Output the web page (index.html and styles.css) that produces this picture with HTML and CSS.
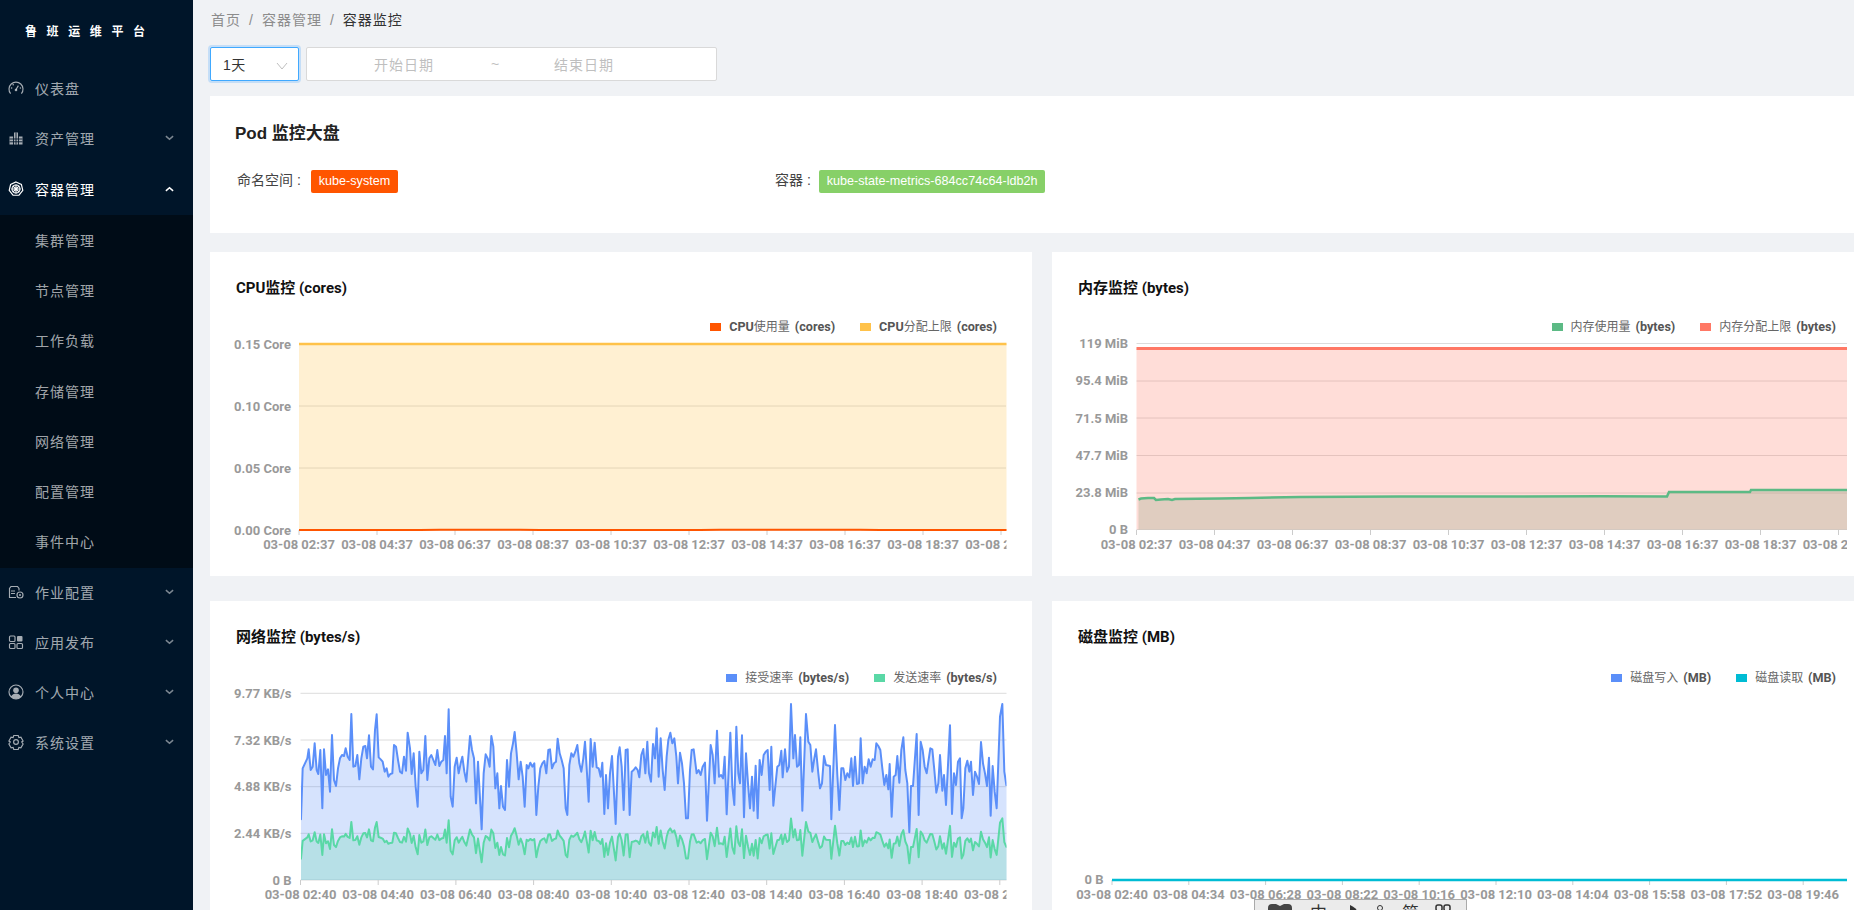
FILE: index.html
```html
<!DOCTYPE html>
<html lang="zh-CN">
<head>
<meta charset="utf-8">
<title>容器监控</title>
<link rel="stylesheet" href="styles.css">
</head>
<body>
<aside class="sidebar">
  <div class="logo">鲁班运维平台</div>
  <nav class="menu">
    <div class="item">
      <svg class="icon" viewBox="0 0 16 16"><path class="ln" d="M2.600 13.600A7 7 0 1 1 13.400 13.600"/><path class="ln" d="M8 9.500 10.400 5.600"/><circle class="dot" cx="8" cy="10" r="1.300"/><circle class="dot" cx="3.600" cy="8" r=".8"/><circle class="dot" cx="5.200" cy="4.800" r=".8"/><circle class="dot" cx="12.400" cy="8" r=".8"/></svg>
      <span>仪表盘</span>
    </div>
    <div class="item">
      <svg class="icon" viewBox="0 0 16 16"><path class="dot" d="M1.500 6.500h3.600v8H1.500zM6 2.500h4v12H6zM10.900 6.500h3.600v8h-3.600z"/><path class="cut" d="M1.500 9h13M1.500 11.800h13M8 2.500v12"/></svg>
      <span>资产管理</span>
      <svg class="chev" viewBox="0 0 10 6"><path d="M1 1l4 3.500L9 1"/></svg>
    </div>
    <div class="item active">
      <svg class="icon" viewBox="0 0 16 16"><path class="ln" d="M8 .9l5.400 2.600 1.400 5.900-3.800 4.800H5l-3.800-4.800 1.400-5.900z"/><circle class="ln" cx="8" cy="8" r="4"/><path class="ln" d="M8 3.500v9M3.500 8h9M4.800 4.800l6.400 6.400M11.200 4.800l-6.400 6.400"/></svg>
      <span>容器管理</span>
      <svg class="chev" viewBox="0 0 10 6"><path d="M1 5l4-3.500L9 5"/></svg>
    </div>
    <div class="submenu">
      <div class="item">集群管理</div>
      <div class="item">节点管理</div>
      <div class="item">工作负载</div>
      <div class="item">存储管理</div>
      <div class="item">网络管理</div>
      <div class="item">配置管理</div>
      <div class="item">事件中心</div>
    </div>
    <div class="item">
      <svg class="icon" viewBox="0 0 16 16"><path class="ln" d="M8 13.500H1.500V4.500L3 2.500h6.500L11 4.500v2"/><path class="ln" d="M3 7h4M3 9.500h4"/><circle class="ln" cx="12" cy="11" r="3"/><circle class="dot" cx="12" cy="11" r="1"/></svg>
      <span>作业配置</span>
      <svg class="chev" viewBox="0 0 10 6"><path d="M1 1l4 3.500L9 1"/></svg>
    </div>
    <div class="item">
      <svg class="icon" viewBox="0 0 16 16"><rect class="ln" x="1.500" y="2" width="5.500" height="5.500" rx="1"/><rect class="dot" x="9" y="2" width="5.500" height="5.500" rx="1"/><rect class="ln" x="1.500" y="9.500" width="5.500" height="5" rx="1"/><rect class="ln" x="9" y="9.500" width="5.500" height="5" rx="1"/></svg>
      <span>应用发布</span>
      <svg class="chev" viewBox="0 0 10 6"><path d="M1 1l4 3.500L9 1"/></svg>
    </div>
    <div class="item">
      <svg class="icon" viewBox="0 0 16 16"><circle class="ln" cx="8" cy="8" r="7"/><circle class="dot" cx="8" cy="6.300" r="2.800"/><path class="dot" d="M3 12.600c1-2.400 3-3.200 5-3.200s4 .8 5 3.200a7 7 0 0 1-10 0z"/></svg>
      <span>个人中心</span>
      <svg class="chev" viewBox="0 0 10 6"><path d="M1 1l4 3.500L9 1"/></svg>
    </div>
    <div class="item">
      <svg class="icon" viewBox="0 0 16 16"><path class="ln" d="M5.800 1.500h4.400l.7 2 2-.3 2.200 3.800-1.400 1 1.400 2-2.200 3.800-2-.4-.7 2.100H5.800l-.7-2.100-2 .4L.9 10l1.400-2-1.400-1 2.200-3.800 2 .3z"/><circle class="ln" cx="8" cy="8" r="2.400"/></svg>
      <span>系统设置</span>
      <svg class="chev" viewBox="0 0 10 6"><path d="M1 1l4 3.500L9 1"/></svg>
    </div>
  </nav>
</aside>

<main class="main">
  <div class="breadcrumb">
    <span>首页</span><i>/</i><span>容器管理</span><i>/</i><span class="current">容器监控</span>
  </div>

  <div class="filters">
    <div class="select">
      <span>1天</span>
      <svg class="select-arrow" viewBox="0 0 12 8"><path d="M1 1l5 6 5-6"/></svg>
    </div>
    <div class="range">
      <span class="ph">开始日期</span>
      <span class="tilde">~</span>
      <span class="ph">结束日期</span>
    </div>
  </div>

  <section class="pod-card">
    <h1 class="pod-title">Pod 监控大盘</h1>
    <div class="pod-fields">
      <div class="field field-ns"><span class="field-label">命名空间 :</span><span class="tag tag-orange">kube-system</span></div>
      <div class="field"><span class="field-label">容器 :</span><span class="tag tag-green">kube-state-metrics-684cc74c64-ldb2h</span></div>
    </div>
  </section>

  <div class="charts">
    <section class="card">
      <h2 class="card-title">CPU监控 (cores)</h2>
      <div class="legend">
        <span class="lg"><b class="sw c-orange"></b><strong>CPU</strong>使用量 <strong>(cores)</strong></span>
        <span class="lg"><b class="sw c-yellow"></b><strong>CPU</strong>分配上限 <strong>(cores)</strong></span>
      </div>
      <svg class="chart" viewBox="210 336 822 240">
        <defs><clipPath id="clip-cpu"><rect x="210" y="336" width="796.500" height="240"/></clipPath></defs>
        <path class="grid" d="M299 344H1006M299 406H1006M299 468H1006M299 530H1006"/>
        <path class="tick" d="M299 530v5M377 530v5M455 530v5M533 530v5M611 530v5M689 530v5M767 530v5M845 530v5M923 530v5M1001 530v5"/>
        <rect class="fill-yellow" x="299" y="344" width="707.500" height="186"/>
        <path class="line-yellow" d="M299 344H1006.500"/>
        <path class="line-orange" d="M299 530H420L440 529.700H520L540 530.100H700L720 529.800H860L880 530.100H1006.500"/>
        <g class="ylab">
          <text x="291" y="348.500">0.15 Core</text><text x="291" y="410.500">0.10 Core</text><text x="291" y="472.500">0.05 Core</text><text x="291" y="534.500">0.00 Core</text>
        </g>
        <g class="xlab" clip-path="url(#clip-cpu)">
          <text x="299" y="548.500">03-08 02:37</text><text x="377" y="548.500">03-08 04:37</text><text x="455" y="548.500">03-08 06:37</text><text x="533" y="548.500">03-08 08:37</text><text x="611" y="548.500">03-08 10:37</text><text x="689" y="548.500">03-08 12:37</text><text x="767" y="548.500">03-08 14:37</text><text x="845" y="548.500">03-08 16:37</text><text x="923" y="548.500">03-08 18:37</text><text x="1001" y="548.500">03-08 20:37</text>
        </g>
      </svg>
    </section>

    <section class="card">
      <h2 class="card-title">内存监控 (bytes)</h2>
      <div class="legend">
        <span class="lg"><b class="sw c-mem"></b>内存使用量 <strong>(bytes)</strong></span>
        <span class="lg"><b class="sw c-red"></b>内存分配上限 <strong>(bytes)</strong></span>
      </div>
      <svg class="chart" viewBox="1052 336 822 240">
        <defs><clipPath id="clip-mem"><rect x="1052" y="336" width="795" height="240"/></clipPath></defs>
        <path class="grid" d="M1136.500 343.500H1847M1136.500 381H1847M1136.500 418H1847M1136.500 455.500H1847M1136.500 493H1847M1136.500 529.500H1847"/>
        <path class="tick" d="M1136.500 530v5M1214.500 530v5M1292.500 530v5M1370.500 530v5M1448.500 530v5M1526.500 530v5M1604.500 530v5M1682.500 530v5M1760.500 530v5M1838.500 530v5"/>
        <rect class="fill-red" x="1136.500" y="348.500" width="710.500" height="181"/>
        <path class="line-red" d="M1136.500 348.500H1847"/>
        <path class="fill-mem" d="M1138.500 529.500V499.500L1141 498.500 1148 498 1154 498 1156 500 1161 499.500 1168 499 1172 500 1175 499 1220 498.500 1250 498 1300 497 1400 496.500 1500 496.500 1600 496.200 1667 496.500 1669 492 1750 492 1751 490 1847 490V529.500Z"/>
        <path class="line-mem" d="M1138.500 499.500L1141 498.500 1148 498 1154 498 1156 500 1161 499.500 1168 499 1172 500 1175 499 1220 498.500 1250 498 1300 497 1400 496.500 1500 496.500 1600 496.200 1667 496.500 1669 492 1750 492 1751 490 1847 490"/>
        <g class="ylab">
          <text x="1128" y="347.500">119 MiB</text><text x="1128" y="385">95.4 MiB</text><text x="1128" y="422.500">71.5 MiB</text><text x="1128" y="460">47.7 MiB</text><text x="1128" y="497">23.8 MiB</text><text x="1128" y="534">0 B</text>
        </g>
        <g class="xlab" clip-path="url(#clip-mem)">
          <text x="1136.500" y="548.500">03-08 02:37</text><text x="1214.500" y="548.500">03-08 04:37</text><text x="1292.500" y="548.500">03-08 06:37</text><text x="1370.500" y="548.500">03-08 08:37</text><text x="1448.500" y="548.500">03-08 10:37</text><text x="1526.500" y="548.500">03-08 12:37</text><text x="1604.500" y="548.500">03-08 14:37</text><text x="1682.500" y="548.500">03-08 16:37</text><text x="1760.500" y="548.500">03-08 18:37</text><text x="1838.500" y="548.500">03-08 20:37</text>
        </g>
      </svg>
    </section>

    <section class="card">
      <h2 class="card-title">网络监控 (bytes/s)</h2>
      <div class="legend">
        <span class="lg"><b class="sw c-blue"></b>接受速率 <strong>(bytes/s)</strong></span>
        <span class="lg"><b class="sw c-teal"></b>发送速率 <strong>(bytes/s)</strong></span>
      </div>
      <svg class="chart" viewBox="210 685 822 240">
        <defs>
          <clipPath id="clip-net"><rect x="210" y="685" width="796.500" height="240"/></clipPath>
          <clipPath id="clip-plot"><rect x="301" y="685" width="705.500" height="195"/></clipPath>
          <path id="net" class="series" d="M296 760V478H303L308 325 315 310 322 295 326 268 332 330 338 320 344 250 350 330 355 342 361 270 367 445 372 268 378 345 384 328 390 395 396 225 402 360 408 378 414 325 420 295 426 285 432 288 437 265 443 290 449 300 454 162 460 320 466 318 472 285 478 358 484 295 490 260 496 258 501 295 507 226 513 320 519 328 525 210 530 163 536 292 542 298 548 305 554 335 560 325 565 350 571 342 577 340 582 255 588 260 594 300 600 335 606 340 612 290 618 332 623 218 630 265 635 342 641 280 647 380 653 440 658 275 664 340 670 330 676 228 682 360 688 295 694 285 700 300 706 315 712 270 718 318 724 305 730 300 735 228 740 340 746 148 752 410 758 440 764 320 770 293 776 340 782 310 787 290 793 335 799 365 810 228 816 270 822 295 828 430 834 305 845 508 851 340 857 283 863 295 869 320 874 228 880 260 886 385 892 340 898 445 903 378 909 440 915 450 921 300 927 380 933 280 939 250 944 216 950 280 956 358 962 305 968 350 974 440 980 315 985 325 991 308 997 320 1003 310 1009 465 1015 380 1021 325 1027 310 1033 303 1039 340 1045 270 1050 268 1056 325 1062 310 1068 305 1073 236 1079 280 1085 300 1091 325 1097 445 1102 465 1108 315 1114 280 1120 290 1126 275 1132 255 1138 310 1144 335 1150 295 1155 245 1161 340 1166 425 1172 237 1178 320 1184 248 1190 322 1196 325 1202 350 1207 308 1213 462 1218 345 1224 445 1230 340 1236 288 1247 492 1254 290 1259 262 1265 320 1271 450 1277 270 1283 268 1289 465 1295 335 1301 330 1307 322 1313 330 1318 352 1324 285 1330 267 1336 340 1342 245 1347 340 1353 365 1359 252 1365 295 1370 205 1376 350 1382 235 1388 330 1394 390 1400 290 1405 240 1411 218 1417 250 1423 235 1429 290 1434 370 1440 278 1446 310 1452 370 1458 475 1464 475 1470 330 1475 270 1481 268 1490 340 1496 330 1502 345 1508 320 1515 308 1521 482 1532 255 1538 285 1544 370 1551 212 1557 350 1563 345 1569 355 1574 290 1580 463 1591 218 1597 380 1603 435 1609 200 1615 340 1620 370 1626 226 1632 472 1638 280 1644 370 1650 445 1656 350 1661 452 1667 317 1673 475 1679 300 1685 345 1691 285 1697 275 1703 270 1709 390 1714 260 1720 437 1732 320 1738 315 1744 272 1748 352 1755 268 1761 335 1767 320 1773 132 1780 295 1785 225 1791 320 1797 315 1801 232 1807 452 1818 162 1825 245 1831 255 1837 335 1843 295 1848 268 1855 340 1860 385 1866 370 1872 288 1878 315 1890 318 1894 478 1905 195 1912 345 1918 450 1924 325 1930 325 1936 360 1942 340 1948 352 1954 295 1959 378 1965 290 1971 372 1977 370 1982 235 1988 370 1994 320 2000 340 2006 298 2012 320 2018 298 2024 300 2029 250 2035 258 2041 270 2047 325 2053 375 2059 345 2065 388 2069 312 2075 470 2081 350 2087 345 2092 288 2098 368 2104 270 2110 232 2116 330 2122 370 2128 517 2133 378 2139 378 2150 222 2156 465 2162 245 2168 270 2174 320 2180 340 2191 265 2197 268 2203 330 2209 398 2215 370 2220 285 2227 392 2232 345 2238 435 2250 196 2256 462 2262 340 2268 375 2274 305 2280 295 2285 475 2290 445 2296 325 2302 302 2308 335 2313 305 2319 405 2325 335 2331 350 2337 372 2343 246 2349 310 2355 340 2361 378 2367 293 2372 467 2378 318 2384 395 2390 445 2400 170 2407 132 2413 335 2419 375H2432V760Z"/>
        </defs>
        <path class="grid" d="M300.500 693.300H1006.500M300.500 740H1006.500M300.500 786.700H1006.500M300.500 833.300H1006.500M300.500 880H1006.500"/>
        <path class="tick" d="M300.500 880v5M378.200 880v5M455.900 880v5M533.600 880v5M611.300 880v5M689 880v5M766.700 880v5M844.400 880v5M922.100 880v5M999.800 880v5"/>
        <g clip-path="url(#clip-plot)">
          <g transform="translate(200 660) scale(.33333)">
            <use href="#net" class="area-blue"/>
            <use href="#net" class="stroke-blue"/>
            <g transform="translate(0 660) scale(1 .35) translate(0 -660)">
              <use href="#net" class="area-teal"/>
              <use href="#net" class="stroke-teal"/>
            </g>
          </g>
        </g>
        <g class="ylab">
          <text x="291.500" y="697.800">9.77 KB/s</text><text x="291.500" y="744.500">7.32 KB/s</text><text x="291.500" y="791.200">4.88 KB/s</text><text x="291.500" y="837.800">2.44 KB/s</text><text x="291.500" y="884.500">0 B</text>
        </g>
        <g class="xlab" clip-path="url(#clip-net)">
          <text x="300.500" y="899">03-08 02:40</text><text x="378.200" y="899">03-08 04:40</text><text x="455.900" y="899">03-08 06:40</text><text x="533.600" y="899">03-08 08:40</text><text x="611.300" y="899">03-08 10:40</text><text x="689" y="899">03-08 12:40</text><text x="766.700" y="899">03-08 14:40</text><text x="844.400" y="899">03-08 16:40</text><text x="922.100" y="899">03-08 18:40</text><text x="999.800" y="899">03-08 20:40</text>
        </g>
      </svg>
    </section>

    <section class="card">
      <h2 class="card-title">磁盘监控 (MB)</h2>
      <div class="legend">
        <span class="lg"><b class="sw c-blue"></b>磁盘写入 <strong>(MB)</strong></span>
        <span class="lg"><b class="sw c-cyan"></b>磁盘读取 <strong>(MB)</strong></span>
      </div>
      <svg class="chart" viewBox="1052 685 822 240">
        <path class="tick" d="M1112 880v5M1188.800 880v5M1265.600 880v5M1342.400 880v5M1419.200 880v5M1496 880v5M1572.800 880v5M1649.600 880v5M1726.400 880v5M1803.200 880v5"/>
        <path class="line-cyan" d="M1112 880H1847"/>
        <g class="ylab"><text x="1103.500" y="884">0 B</text></g>
        <g class="xlab">
          <text x="1112" y="899">03-08 02:40</text><text x="1188.800" y="899">03-08 04:34</text><text x="1265.600" y="899">03-08 06:28</text><text x="1342.400" y="899">03-08 08:22</text><text x="1419.200" y="899">03-08 10:16</text><text x="1496" y="899">03-08 12:10</text><text x="1572.800" y="899">03-08 14:04</text><text x="1649.600" y="899">03-08 15:58</text><text x="1726.400" y="899">03-08 17:52</text><text x="1803.200" y="899">03-08 19:46</text>
        </g>
      </svg>
    </section>
  </div>
</main>

<div class="ime">
  <svg class="ime-logo" viewBox="0 0 24 24"><path d="M0 4q0-4 4-4h4l4 2 4-2h4q4 0 4 4v16q0 4-4 4H4q-4 0-4-4z"/></svg>
  <span class="ime-text">中</span>
  <svg class="ime-moon" viewBox="0 0 14 16"><path d="M3 1q7 3 8 8l-8 6z"/></svg>
  <svg class="ime-dot" viewBox="0 0 10 10"><circle cx="5" cy="4" r="2.500"/></svg>
  <span class="ime-text">简</span>
  <svg class="ime-grid" viewBox="0 0 16 16"><rect x="1" y="1" width="6" height="6" rx="2"/><rect x="9" y="1" width="6" height="6" rx="2"/></svg>
</div>
</body>
</html>
```
FILE: styles.css
```css
* { box-sizing: border-box; }
html, body { margin: 0; height: 100%; }
body {
  display: flex;
  height: 100vh;
  overflow: hidden;
  background: #f0f2f5;
  font-family: "Liberation Sans", "Noto Sans CJK SC", sans-serif;
  font-size: 14px;
  color: #333;
}

/* sidebar */
.sidebar { flex: 0 0 193px; background: #001529; color: rgba(255,255,255,.65); }
.logo {
  height: 62.5px;
  padding: 23px 0 0 25px;
  font-size: 12px;
  line-height: 18px;
  font-weight: 700;
  letter-spacing: 9.6px;
  color: #fff;
  white-space: nowrap;
}
.item {
  display: flex;
  align-items: center;
  height: 50.2px;
  padding: 0 19px 0 8px;
  letter-spacing: 1px;
}
.item > span { margin-left: 11px; }
.item.active { color: #fff; height: 53.6px; padding-top: .5px; padding-bottom: 2px; }
.submenu { background: #000c17; padding-bottom: 2.2px; }
.submenu .item { padding-left: 35px; }
.submenu .item:first-child { margin-top: -1.5px; }
.submenu + .item { margin-top: -1.8px; }
.icon { width: 16px; height: 16px; flex: none; }
.icon .ln { fill: none; stroke: currentColor; stroke-width: 1.150; }
.icon .dot { fill: currentColor; stroke: none; }
.icon .cut { fill: none; stroke: #001529; stroke-width: .9; }
.chev { width: 9px; height: 6px; margin-left: auto; flex: none; opacity: .75; }
.active .chev { opacity: 1; }
.chev path { fill: none; stroke: currentColor; stroke-width: 1.700; }

/* main */
.main { flex: 1 1 auto; min-width: 0; overflow: hidden; padding: 9px 0 0 17px; }
.breadcrumb { height: 22px; line-height: 22px; letter-spacing: 1px; color: #8c8c8c; white-space: nowrap; display: flex; padding-left: 1px; }
.breadcrumb i { font-style: normal; margin: 0 8px; }
.breadcrumb .current { color: #333; }

.filters { display: flex; gap: 7px; margin-top: 16px; height: 34px; }
.select {
  width: 89px;
  background: #fff;
  border: 1px solid #40a9ff;
  border-radius: 2px;
  box-shadow: 0 0 0 2px rgba(24,144,255,.2);
  display: flex;
  align-items: center;
  justify-content: space-between;
  padding: 0 10px 0 12px;
  letter-spacing: .5px;
}
.select-arrow { width: 12px; height: 8px; margin-top: 3px; }
.select-arrow path { fill: none; stroke: #bfbfbf; stroke-width: 1; }
.range {
  width: 411px;
  background: #fff;
  border: 1px solid #d9d9d9;
  border-radius: 2px;
  display: flex;
  align-items: center;
  color: #bfbfbf;
  letter-spacing: 1px;
  padding-left: 67px;
}
.range .tilde { margin: 0 0 0 57px; width: 63px; }

.pod-card { width: 1664px; height: 137px; margin-top: 15px; background: #fff; padding: 27px 0 0 25px; }
.pod-title { margin: 0; font-size: 17px; line-height: 22px; font-weight: 700; color: #222; }
.pod-fields { display: flex; margin-top: 24px; padding-left: 2px; }
.field { display: flex; align-items: center; }
.field-ns { width: 538px; }
.field-label { margin: 0 8px 4px 0; color: #444; }
.field-ns .field-label { margin-right: 10px; }
.tag { height: 23px; line-height: 23px; padding: 0 8px; border-radius: 2px; font-size: 12.600px; color: #fff; }
.tag-orange { background: #f50; }
.tag-green { background: #87d068; }

/* chart cards */
.charts { display: grid; grid-template-columns: 822px 822px; column-gap: 20px; row-gap: 25px; margin-top: 19px; }
.card { height: 324px; background: #fff; }
.card-title {
  margin: 26px 0 0 26px;
  font-family: Roboto, "Noto Sans CJK SC", sans-serif;
  font-size: 15px;
  line-height: 20px;
  font-weight: 700;
  color: #111;
}
.legend {
  display: flex;
  justify-content: flex-end;
  gap: 25px;
  margin-top: 21px;
  padding-right: 35px;
  height: 16px;
  font-family: Roboto, "Noto Sans CJK SC", sans-serif;
  font-size: 12px;
  line-height: 16px;
  color: #666;
  white-space: pre;
}
.card:nth-child(even) .legend { padding-right: 38px; }
.card:nth-child(n+3) .legend { margin-top: 23px; }
.card:nth-child(n+3) .chart { margin-top: -1px; }
.lg { display: flex; align-items: center; }
.lg strong { font-size: 12.600px; font-weight: 700; color: #555; }
.lg strong:last-child { margin-left: 2px; }
.sw { width: 11px; height: 8px; margin-right: 8px; }
.c-orange { background: #f50; }
.c-yellow { background: #ffc24a; }
.c-mem { background: #5cba85; }
.c-red { background: #ff7865; }
.c-blue { background: #5b8ff9; }
.c-teal { background: #5ad8a6; }
.c-cyan { background: #00bcd4; }

.chart { display: block; width: 822px; height: 240px; margin-top: 1px; overflow: hidden; }
.grid { fill: none; stroke: #dcdcdc; stroke-width: 1; }
.tick { fill: none; stroke: #ccc; stroke-width: 1; }
.ylab text, .xlab text { font-family: Roboto, sans-serif; font-size: 13px; font-weight: 700; fill: #999; }
.ylab text { text-anchor: end; }
.xlab text { text-anchor: middle; }
.fill-yellow { fill: #ffc24a; fill-opacity: .25; }
.line-yellow { fill: none; stroke: #ffc24a; stroke-width: 2.500; }
.line-orange { fill: none; stroke: #f50; stroke-width: 2; }
.fill-red { fill: #ff7865; fill-opacity: .25; }
.line-red { fill: none; stroke: #ff7865; stroke-width: 3; }
.fill-mem { fill: #82a078; fill-opacity: .25; }
.line-mem { fill: none; stroke: #5cba85; stroke-width: 2.500; }
.line-cyan { fill: none; stroke: #00bcd4; stroke-width: 2.500; }
.series { vector-effect: non-scaling-stroke; stroke-linejoin: round; }
.area-blue { fill: #5b8ff9; fill-opacity: .25; stroke: none; }
.stroke-blue { fill: none; stroke: #5b8ff9; stroke-width: 2; }
.area-teal { fill: #5ad8a6; fill-opacity: .25; stroke: none; }
.stroke-teal { fill: none; stroke: #5ad8a6; stroke-width: 2; }

/* floating input-method bar over the page bottom */
.ime {
  position: absolute;
  left: 1254px;
  top: 899px;
  width: 213px;
  height: 30px;
  background: #ebebeb;
  border: 1px solid #aaa;
  display: flex;
  align-items: flex-start;
  padding: 4px 0 0 13px;
  color: #333;
  font-size: 18px;
  line-height: 20px;
}
.ime-logo { width: 24px; height: 24px; fill: #444; }
.ime-text { font-size: 17px; }
.ime > .ime-text:nth-of-type(1) { margin-left: 18px; }
.ime-moon { width: 14px; height: 16px; margin-left: 20px; fill: #333; }
.ime-dot { width: 10px; height: 10px; margin-left: 14px; fill: none; stroke: #333; }
.ime > .ime-text:last-of-type { margin-left: 17px; }
.ime-grid { width: 16px; height: 16px; margin-left: 16px; fill: none; stroke: #333; stroke-width: 1.500; }
```
